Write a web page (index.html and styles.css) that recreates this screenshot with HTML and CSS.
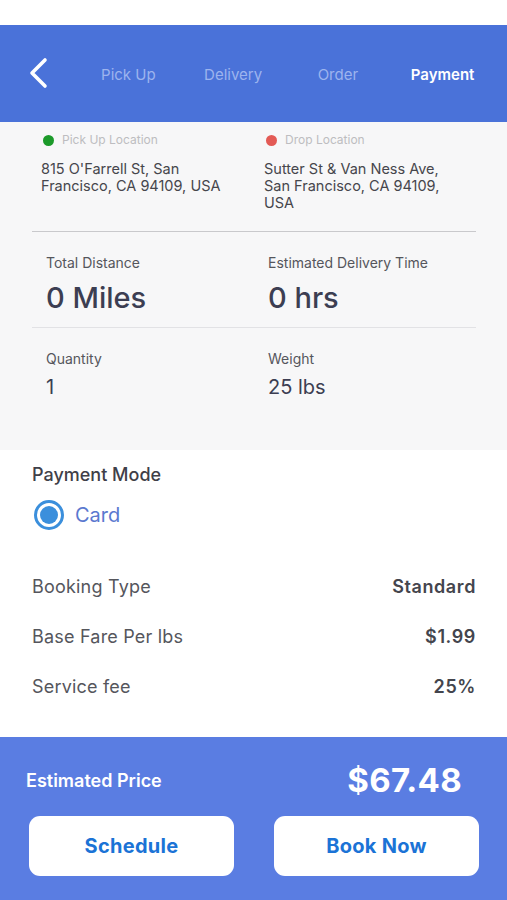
FILE: index.html
```html
<!DOCTYPE html>
<html lang="en">
<head>
<meta charset="UTF-8">
<meta name="viewport" content="width=device-width, initial-scale=1.0">
<title>Payment</title>
<link rel="stylesheet" href="styles.css">
</head>
<body>

<div class="status-bar"></div>

<div class="header">
    <div class="back">
        <svg width="20" height="32" viewBox="0 0 20 32">
            <path d="M16 3 L3 16 L16 29" fill="none" stroke="#fff" stroke-width="3.6" stroke-linecap="round" stroke-linejoin="round"/>
        </svg>
    </div>
    <div class="tab">Pick Up</div>
    <div class="tab">Delivery</div>
    <div class="tab">Order</div>
    <div class="tab active">Payment</div>
</div>

<div class="summary">
    <div class="locations">
        <div class="location">
            <div class="loc-label"><span class="dot green"></span>Pick Up Location</div>
            <div class="address">815 O'Farrell St, San<br>Francisco, CA 94109, USA</div>
        </div>
        <div class="location">
            <div class="loc-label"><span class="dot red"></span>Drop Location</div>
            <div class="address">Sutter St &amp; Van Ness Ave,<br>San Francisco, CA 94109,<br>USA</div>
        </div>
    </div>

    <div class="stats first">
        <div class="stat">
            <div class="stat-label">Total Distance</div>
            <div class="stat-big">0 Miles</div>
        </div>
        <div class="stat">
            <div class="stat-label">Estimated Delivery Time</div>
            <div class="stat-big">0 hrs</div>
        </div>
    </div>

    <div class="stats second">
        <div class="stat">
            <div class="stat-label">Quantity</div>
            <div class="stat-small">1</div>
        </div>
        <div class="stat">
            <div class="stat-label">Weight</div>
            <div class="stat-small">25 lbs</div>
        </div>
    </div>
</div>

<div class="payment">
    <div class="section-title">Payment Mode</div>
    <div class="radio-row">
        <span class="radio"><span class="radio-dot"></span></span>
        <span class="radio-text">Card</span>
    </div>

    <div class="fare-row">
        <span class="fare-label">Booking Type</span>
        <span class="fare-value">Standard</span>
    </div>
    <div class="fare-row">
        <span class="fare-label">Base Fare Per lbs</span>
        <span class="fare-value">$1.99</span>
    </div>
    <div class="fare-row">
        <span class="fare-label">Service fee</span>
        <span class="fare-value">25%</span>
    </div>
</div>

<div class="footer">
    <div class="price-row">
        <span class="price-label">Estimated Price</span>
        <span class="price-value">$67.48</span>
    </div>
    <div class="actions">
        <button class="action-btn">Schedule</button>
        <button class="action-btn">Book Now</button>
    </div>
</div>

</body>
</html>
```

FILE: styles.css
```css
body {
    font-family: Inter, 'Liberation Sans', sans-serif;
    margin: 0;
    padding: 0;
    background-color: #fff;
    width: 507px;
    height: 900px;
    overflow: hidden;
}
.status-bar {
    height: 25px;
    background-color: #fff;
}
.header {
    display: flex;
    align-items: center;
    height: 97px;
    background-color: #4a72d9;
    padding-right: 12px;
    box-sizing: border-box;
}
.back {
    width: 76px;
    padding-left: 29px;
    box-sizing: border-box;
    display: flex;
    align-items: center;
    margin-top: -2px;
}
.tab {
    flex: 1;
    text-align: center;
    font-size: 15px;
    color: #9db4ee;
    margin-top: 1px;
}
.tab.active {
    color: #fff;
    font-weight: 600;
}
.summary {
    background-color: #f7f7f8;
    padding: 9px 31px 51px 32px;
}
.locations {
    display: grid;
    grid-template-columns: 223px 1fr;
    padding-left: 9px;
    padding-bottom: 20px;
    border-bottom: 1px solid #c9c9cc;
}
.loc-label {
    display: flex;
    align-items: center;
    font-size: 12px;
    line-height: 18px;
    color: #bdbdc0;
}
.dot {
    width: 11px;
    height: 11px;
    border-radius: 50%;
    margin-right: 8px;
    margin-left: 2px;
}
.dot.green {
    background-color: #1c9a2a;
}
.dot.red {
    background-color: #e35a55;
}
.address {
    margin-top: 11px;
    font-size: 14.5px;
    line-height: 17px;
    color: #46464c;
}
.stats {
    display: grid;
    grid-template-columns: 222px 1fr;
    padding-left: 14px;
    padding-top: 22px;
}
.stats.first {
    padding-bottom: 12px;
    border-bottom: 1px solid #e2e2e5;
}
.stat-label {
    font-size: 14px;
    line-height: 18px;
    color: #55565c;
}
.stat-big {
    margin-top: 9px;
    font-size: 29px;
    line-height: 34px;
    font-weight: 500;
    color: #3c3e52;
}
.stat-small {
    margin-top: 7px;
    font-size: 20px;
    line-height: 24px;
    color: #3c3e52;
}
.payment {
    padding: 14px 31px 26px 32px;
}
.section-title {
    font-size: 18px;
    line-height: 22px;
    font-weight: 500;
    color: #3f4048;
}
.radio-row {
    display: flex;
    align-items: center;
    margin-top: 14px;
    margin-bottom: 31px;
}
.radio {
    width: 30px;
    height: 30px;
    border-radius: 50%;
    border: 3px solid #3b8fdc;
    box-sizing: border-box;
    display: flex;
    align-items: center;
    justify-content: center;
    margin-left: 2px;
}
.radio-dot {
    width: 18px;
    height: 18px;
    border-radius: 50%;
    background-color: #3b8fdc;
}
.radio-text {
    margin-left: 11px;
    font-size: 20px;
    color: #5a78cf;
}
.fare-row {
    display: flex;
    justify-content: space-between;
    align-items: center;
    height: 50px;
}
.fare-label {
    font-size: 18px;
    color: #55565c;
    letter-spacing: 0.2px;
}
.fare-value {
    font-size: 18px;
    font-weight: 600;
    color: #44454d;
    letter-spacing: 0.6px;
}
.footer {
    background-color: #5a7de2;
    height: 163px;
    padding: 23px 28px 0 29px;
    box-sizing: border-box;
}
.price-row {
    display: flex;
    justify-content: space-between;
    align-items: center;
    height: 40px;
    padding-right: 17px;
    margin-left: -3px;
}
.price-label {
    font-size: 18px;
    font-weight: 600;
    color: #fff;
}
.price-value {
    font-size: 33px;
    font-weight: 700;
    color: #fff;
    letter-spacing: 0.3px;
}
.actions {
    display: flex;
    gap: 40px;
    margin-top: 16px;
}
.action-btn {
    flex: 1;
    height: 60px;
    background-color: #fff;
    border: none;
    border-radius: 11px;
    font-family: inherit;
    font-size: 20px;
    font-weight: 700;
    color: #1b73d6;
    letter-spacing: 0.3px;
}
```
